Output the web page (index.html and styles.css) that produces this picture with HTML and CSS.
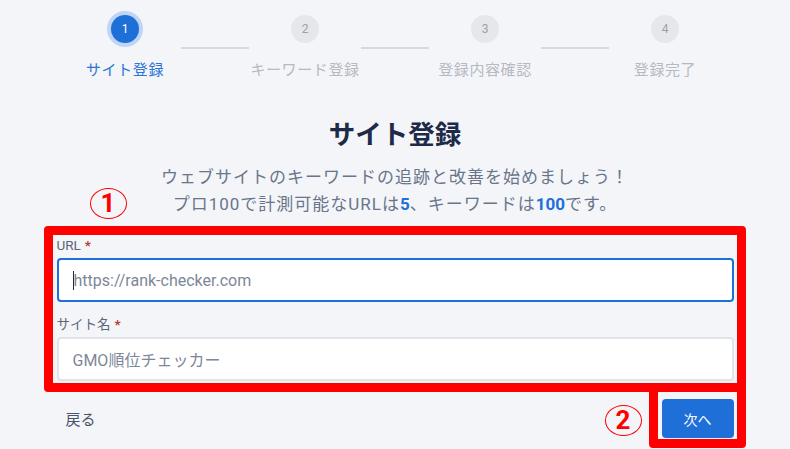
FILE: index.html
```html
<!DOCTYPE html>
<html lang="ja">
<head>
<meta charset="utf-8">
<title>サイト登録</title>
<link rel="stylesheet" href="styles.css">
</head>
<body>
<div class="stepper">
  <div class="step active">
    <div class="step-circle">1</div>
    <div class="step-label">サイト登録</div>
  </div>
  <div class="step">
    <div class="connector"></div>
    <div class="step-circle">2</div>
    <div class="step-label">キーワード登録</div>
  </div>
  <div class="step">
    <div class="connector"></div>
    <div class="step-circle">3</div>
    <div class="step-label">登録内容確認</div>
  </div>
  <div class="step">
    <div class="connector"></div>
    <div class="step-circle">4</div>
    <div class="step-label">登録完了</div>
  </div>
</div>

<h1 class="title">サイト登録</h1>
<p class="subtitle">ウェブサイトのキーワードの追跡と改善を始めましょう！<br>プロ100で計測可能なURLは<b class="num">5</b>、キーワードは<b class="num">100</b>です。</p>

<div class="form">
  <div class="field">
    <div class="label">URL<span class="req">*</span></div>
    <div class="input focused"><span class="caret"></span><span class="placeholder">https://rank-checker.com</span></div>
  </div>
  <div class="field second">
    <div class="label">サイト名<span class="req">*</span></div>
    <div class="input"><span class="placeholder">GMO順位チェッカー</span></div>
  </div>
  <div class="actions">
    <button class="back">戻る</button>
    <button class="next">次へ</button>
  </div>

  <div class="mark-box box1"></div>
  <div class="mark-box box2"></div>
  <div class="mark-num num1">1</div>
  <div class="mark-num num2">2</div>
</div>
</body>
</html>
```

FILE: styles.css
```css
* { box-sizing: border-box; }

body {
  margin: 0;
  background: #f4f5f9;
  font-family: Roboto, "Noto Sans CJK JP", sans-serif;
  height: 449px;
  overflow: hidden;
}

.stepper {
  display: grid;
  grid-template-columns: repeat(4, 180px);
  justify-content: center;
  padding-top: 15px;
}

.step {
  position: relative;
  display: flex;
  flex-direction: column;
  align-items: center;
}

.step-circle {
  width: 28px;
  height: 28px;
  border-radius: 50%;
  background: #e5e7eb;
  color: #9aa1ac;
  font-size: 12px;
  display: flex;
  align-items: center;
  justify-content: center;
}

.step.active .step-circle {
  background: #1f6fd9;
  color: #ffffff;
  box-shadow: 0 0 0 4px #bfd5f6;
}

.step-label {
  margin-top: 17px;
  font-size: 15px;
  line-height: 20px;
  letter-spacing: 0.6px;
  color: #b4b9c2;
}

.step.active .step-label { color: #2a74d6; }

.connector {
  position: absolute;
  top: 32px;
  left: calc(-50% + 56px);
  width: 68px;
  height: 2px;
  background: #d6d9df;
}

.title {
  margin: 37px 0 0;
  text-align: center;
  font-size: 26.5px;
  line-height: 36px;
  font-weight: 700;
  color: #1d2b48;
}

.subtitle {
  margin: 11px 0 0;
  text-align: center;
  font-size: 17px;
  line-height: 27px;
  letter-spacing: 1px;
  color: #69758a;
}

.num {
  color: #1f6fd9;
  font-weight: 700;
  letter-spacing: 0;
}

.form {
  position: relative;
  width: 677px;
  margin: 18px auto 0;
}

.field.second { margin-top: 13px; }

.label {
  font-size: 13.5px;
  line-height: 18px;
  color: #5b6678;
  margin-bottom: 4px;
}

.req {
  color: #b83a2e;
  margin-left: 4px;
  font-weight: 700;
}

.input {
  height: 44px;
  border: 2px solid #e0e3e8;
  border-radius: 4px;
  background: #ffffff;
  padding: 0 14px;
  display: flex;
  align-items: center;
  font-size: 16px;
}

.input.focused { border-color: #1f6fd9; }

.caret {
  display: inline-block;
  width: 1px;
  height: 19px;
  background: #1d2b48;
}

.placeholder { color: #7d8797; }

.actions {
  margin-top: 18px;
  display: flex;
  justify-content: space-between;
  align-items: center;
}

.back {
  border: 0;
  background: transparent;
  padding: 0 9px;
  font-family: inherit;
  font-size: 15px;
  color: #4a5467;
}

.next {
  width: 72px;
  height: 39px;
  border: 0;
  border-radius: 4px;
  background: #1f6fd9;
  color: #ffffff;
  font-family: inherit;
  font-size: 14px;
}

.mark-box {
  position: absolute;
  border: 9px solid #ff0000;
  border-radius: 4px;
  pointer-events: none;
}

.box1 { left: -13px; top: -10px; width: 702px; height: 166px; }
.box2 { left: 592px; top: 147px; width: 97px; height: 65px; }

.mark-num {
  position: absolute;
  width: 37px;
  height: 31px;
  border: 1.5px solid #ff0000;
  border-radius: 50%;
  color: #ff0000;
  font-size: 26px;
  font-weight: 700;
  line-height: 28px;
  text-align: center;
}

.num1 { left: 33px; top: -48px; }
.num2 { left: 548px; top: 169px; }
```
